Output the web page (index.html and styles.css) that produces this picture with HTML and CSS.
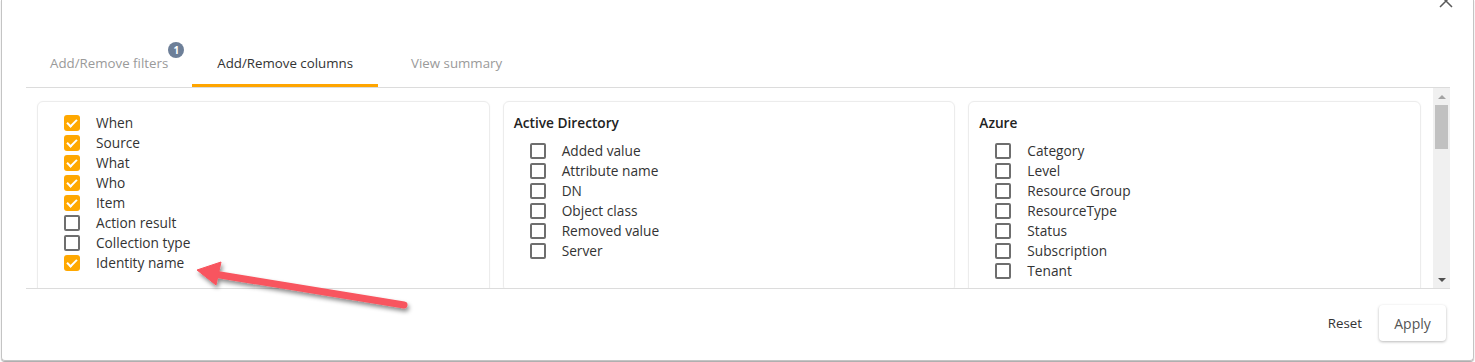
FILE: index.html
```html
<!DOCTYPE html>
<html>
<head>
<meta charset="utf-8">
<link rel="stylesheet" href="styles.css">
</head>
<body>
<div class="dialog">
  <button class="close" aria-label="Close">
    <svg width="14" height="14" viewBox="0 0 14 14"><path d="M1 1 L13 13 M13 1 L1 13" stroke="#5a5a5a" stroke-width="1.5" fill="none"/></svg>
  </button>
  <div class="tabs">
    <div class="tab"><span class="tab-label">Add/Remove filters<span class="badge">1</span></span></div>
    <div class="tab active"><span class="tab-label">Add/Remove columns</span></div>
    <div class="tab last"><span class="tab-label">View summary</span></div>
  </div>
  <div class="scroll">
    <div class="cards">
      <div class="card">
        <div class="item"><span class="cb on"></span><span>When</span></div>
        <div class="item"><span class="cb on"></span><span>Source</span></div>
        <div class="item"><span class="cb on"></span><span>What</span></div>
        <div class="item"><span class="cb on"></span><span>Who</span></div>
        <div class="item"><span class="cb on"></span><span>Item</span></div>
        <div class="item"><span class="cb"></span><span>Action result</span></div>
        <div class="item"><span class="cb"></span><span>Collection type</span></div>
        <div class="item"><span class="cb on"></span><span>Identity name</span></div>
      </div>
      <div class="card">
        <div class="card-title">Active Directory</div>
        <div class="item"><span class="cb"></span><span>Added value</span></div>
        <div class="item"><span class="cb"></span><span>Attribute name</span></div>
        <div class="item"><span class="cb"></span><span>DN</span></div>
        <div class="item"><span class="cb"></span><span>Object class</span></div>
        <div class="item"><span class="cb"></span><span>Removed value</span></div>
        <div class="item"><span class="cb"></span><span>Server</span></div>
      </div>
      <div class="card">
        <div class="card-title">Azure</div>
        <div class="item"><span class="cb"></span><span>Category</span></div>
        <div class="item"><span class="cb"></span><span>Level</span></div>
        <div class="item"><span class="cb"></span><span>Resource Group</span></div>
        <div class="item"><span class="cb"></span><span>ResourceType</span></div>
        <div class="item"><span class="cb"></span><span>Status</span></div>
        <div class="item"><span class="cb"></span><span>Subscription</span></div>
        <div class="item"><span class="cb"></span><span>Tenant</span></div>
      </div>
    </div>
    <div class="scrollbar">
      <div class="sb-btn"><span class="tri up"></span></div>
      <div class="sb-track"><div class="sb-thumb"></div></div>
      <div class="sb-btn"><span class="tri down"></span></div>
    </div>
  </div>
  <div class="footer">
    <button class="btn-link">Reset</button>
    <button class="btn">Apply</button>
  </div>
</div>
<svg class="annotation" width="1475" height="362" viewBox="0 0 1475 362">
  <defs>
    <filter id="sh" x="-10%" y="-50%" width="120%" height="200%">
      <feDropShadow dx="1.5" dy="3" stdDeviation="2" flood-color="#000" flood-opacity="0.45"/>
    </filter>
  </defs>
  <g filter="url(#sh)" fill="#f8555e" stroke="#f8555e">
    <line x1="214" y1="274" x2="404" y2="305" stroke-width="7" stroke-linecap="round"/>
    <polygon points="197,270 221,262 216,285" stroke-width="1" stroke-linejoin="round"/>
  </g>
</svg>
</body>
</html>
```
FILE: styles.css
```css
html, body {
  margin: 0;
  padding: 0;
  background: #fff;
  overflow: hidden;
  width: 1475px;
  height: 362px;
}
body {
  font-family: "Open Sans", "Noto Sans", sans-serif;
  font-size: 13.7px;
  color: #333;
}
.dialog {
  position: relative;
  margin-left: 1px;
  width: 1473px;
  height: 361px;
  box-sizing: border-box;
  border: 1px solid #c4c4c4;
  border-top: none;
  border-radius: 0 0 4px 4px;
  box-shadow: 0 1px 1px rgba(0,0,0,0.35);
  padding: 0 23px 0 24px;
  display: flex;
  flex-direction: column;
}
.close {
  position: absolute;
  top: -6px;
  right: 20px;
  padding: 0;
  border: none;
  background: none;
  width: 14px;
  height: 14px;
}
.close svg { display: block; }
.tabs {
  margin-top: 41px;
  display: flex;
  border-bottom: 1px solid #dcdcdc;
  font-size: 13.3px;
}
.tab {
  height: 46px;
  box-sizing: border-box;
  padding: 1px 24px 0 24px;
  line-height: 43px;
  border-bottom: 3px solid transparent;
  color: #9a9a9a;
  white-space: nowrap;
}
.tab.active {
  color: #333;
  border-bottom-color: #ffa500;
  padding: 1px 25px 0 25px;
}
.tab.last { margin-left: 9px; }
.tab-label { position: relative; }
.badge {
  position: absolute;
  right: -16px;
  top: -12px;
  width: 16px;
  height: 16px;
  border-radius: 50%;
  background: #6d7f98;
  color: #fff;
  font-size: 10px;
  font-weight: 700;
  line-height: 16px;
  text-align: center;
}
.scroll {
  height: 200px;
  display: flex;
  border-bottom: 1px solid #dcdcdc;
}
.cards {
  flex: 1;
  overflow: hidden;
  padding: 13px 12px 0 11px;
  display: grid;
  grid-template-columns: repeat(3, 1fr);
  gap: 13px;
  align-items: start;
}
.card {
  border: 1px solid #ececec;
  border-radius: 6px;
  padding: 11px 10px 30px 10px;
  box-shadow: 0 0 2px rgba(0,0,0,0.04);
}
.card-title {
  font-weight: 600;
  color: #222;
  line-height: 20px;
  margin-bottom: 8px;
}
.item {
  display: flex;
  align-items: center;
  gap: 16px;
  height: 20px;
  padding-left: 16px;
  white-space: nowrap;
  color: #333;
}
.item span:last-child { margin-top: -1px; }
.cb {
  width: 16px;
  height: 16px;
  box-sizing: border-box;
  border: 2px solid #6e6e6e;
  border-radius: 2px;
  background: #fff;
  flex: none;
  position: relative;
}
.cb.on {
  border: none;
  background: #ffa800;
  border-radius: 3px;
}
.cb.on::after {
  content: "";
  position: absolute;
  left: 5px;
  top: 2px;
  width: 4px;
  height: 8px;
  border: solid #fff;
  border-width: 0 2px 2px 0;
  transform: rotate(45deg);
}
.scrollbar {
  width: 17px;
  background: #f0f0f0;
  display: flex;
  flex-direction: column;
}
.sb-btn {
  height: 17px;
  display: flex;
  align-items: center;
  justify-content: center;
}
.sb-track {
  flex: 1;
  padding: 0 2px;
}
.sb-thumb {
  height: 44px;
  background: #c1c1c1;
}
.tri {
  width: 0;
  height: 0;
  border-left: 4px solid transparent;
  border-right: 4px solid transparent;
}
.tri.up { border-bottom: 4px solid #a3a3a3; }
.tri.down { border-top: 4px solid #505050; }
.footer {
  display: flex;
  justify-content: flex-end;
  align-items: center;
  gap: 17px;
  padding: 16px 4px 0 0;
}
.btn-link {
  background: none;
  border: none;
  padding: 0;
  font-family: inherit;
  font-size: 13.3px;
  color: #333;
}
.btn {
  width: 67px;
  height: 36px;
  border: none;
  border-radius: 4px;
  background: #fff;
  box-shadow: 0 1px 3px rgba(0,0,0,0.28);
  font-family: inherit;
  font-size: 14px;
  color: #555;
  padding: 0;
}
.annotation {
  position: absolute;
  left: 0;
  top: 0;
  pointer-events: none;
}
```
